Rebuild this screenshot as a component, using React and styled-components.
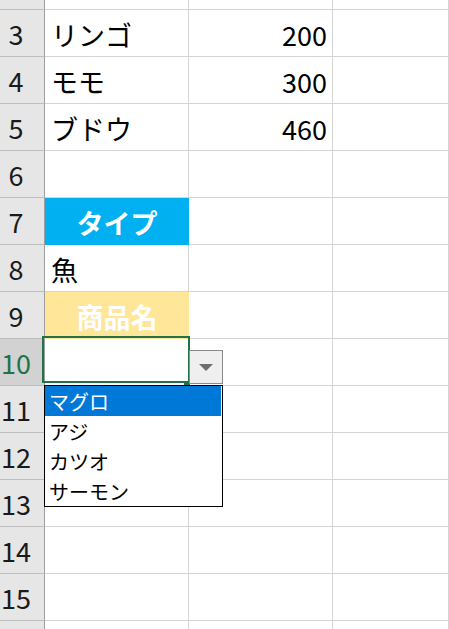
import React from 'react';
import styled, { createGlobalStyle } from 'styled-components';

const GlobalStyle = createGlobalStyle`
  html, body {
    margin: 0;
    padding: 0;
    background: #fff;
    overflow: hidden;
  }
  body {
    font-family: "Noto Sans CJK JP", "Noto Sans", sans-serif;
  }
`;

const Sheet = styled.div`
  display: grid;
  grid-template-columns: 45px 144px 144px 1fr;
  grid-template-rows: 10px repeat(13, 47px) 9px;
  width: 449px;
  height: 629px;
  overflow: hidden;
`;

const RowHead = styled.div`
  box-sizing: border-box;
  display: flex;
  align-items: center;
  justify-content: center;
  padding-right: 12px;
  background: ${(p) => (p.$active ? '#d2d2d2' : '#e6e6e6')};
  color: ${(p) => (p.$active ? '#217346' : '#1a1a1a')};
  border-right: 1px solid #9e9e9e;
  border-bottom: 1px solid #bdbdbd;
  font-size: 27px;
  line-height: 1;
  overflow: hidden;
`;

const Cell = styled.div`
  box-sizing: border-box;
  position: relative;
  display: flex;
  align-items: center;
  justify-content: ${(p) => p.$align || 'flex-start'};
  padding: 2px 5px 0 6px;
  background: ${(p) => p.$fill || '#fff'};
  border-right: 1px solid ${(p) => p.$fill || '#d4d4d4'};
  border-bottom: 1px solid ${(p) => p.$fill || '#d4d4d4'};
  color: ${(p) => (p.$fill ? '#fff' : '#000')};
  font-weight: ${(p) => (p.$bold ? 700 : 400)};
  font-size: 27px;
  line-height: 1;
  white-space: nowrap;
`;

const Selection = styled.div`
  position: absolute;
  left: -3px;
  top: -3px;
  width: 148px;
  height: 47px;
  box-sizing: border-box;
  border: 2px solid #217346;
  z-index: 2;
`;

const FillHandle = styled.div`
  position: absolute;
  left: 139px;
  top: 42px;
  width: 6px;
  height: 5px;
  background: #217346;
  z-index: 3;
`;

const DropButton = styled.div`
  position: absolute;
  left: 144px;
  top: 11px;
  width: 34px;
  height: 34px;
  box-sizing: border-box;
  background: #efefef;
  border: 1px solid #8a8a8a;
  display: flex;
  align-items: center;
  justify-content: center;
  z-index: 3;
`;

const Arrow = styled.span`
  width: 0;
  height: 0;
  border-left: 7px solid transparent;
  border-right: 7px solid transparent;
  border-top: 7px solid #6d6d6d;
`;

const List = styled.div`
  position: absolute;
  left: -1px;
  top: 46px;
  width: 179px;
  height: 122px;
  box-sizing: border-box;
  background: #fff;
  border: 1px solid #000;
  padding: 0 1px 0 0;
  display: flex;
  flex-direction: column;
  z-index: 4;
`;

const Item = styled.div`
  height: 30px;
  display: flex;
  align-items: center;
  padding: 2px 0 0 4px;
  box-sizing: border-box;
  font-size: 20px;
  line-height: 1;
  background: ${(p) => (p.$selected ? '#0078d7' : 'transparent')};
  color: ${(p) => (p.$selected ? '#fff' : '#000')};
`;

const rows = [
  { n: 2, b: '', c: '', partial: true },
  { n: 3, b: 'リンゴ', c: '200' },
  { n: 4, b: 'モモ', c: '300' },
  { n: 5, b: 'ブドウ', c: '460' },
  { n: 6, b: '', c: '' },
  { n: 7, b: 'タイプ', c: '', fill: '#00b0f0' },
  { n: 8, b: '魚', c: '' },
  { n: 9, b: '商品名', c: '', fill: '#ffe699' },
  { n: 10, b: '', c: '', active: true },
  { n: 11, b: '', c: '' },
  { n: 12, b: '', c: '' },
  { n: 13, b: '', c: '' },
  { n: 14, b: '', c: '' },
  { n: 15, b: '', c: '' },
  { n: 16, b: '', c: '', partial: true },
];

const options = ['マグロ', 'アジ', 'カツオ', 'サーモン'];

export default function App() {
  return (
    <>
      <GlobalStyle />
      <Sheet>
        {rows.map((r) => (
          <React.Fragment key={r.n}>
            <RowHead $active={r.active}>{r.partial ? '' : r.n}</RowHead>
            <Cell $fill={r.fill} $bold={!!r.fill} $align={r.fill ? 'center' : undefined}>
              {r.b}
              {r.active && (
                <>
                  <Selection />
                  <FillHandle />
                  <DropButton>
                    <Arrow />
                  </DropButton>
                  <List>
                    {options.map((o, i) => (
                      <Item key={o} $selected={i === 0}>
                        {o}
                      </Item>
                    ))}
                  </List>
                </>
              )}
            </Cell>
            <Cell $align="flex-end">{r.c}</Cell>
            <Cell />
          </React.Fragment>
        ))}
      </Sheet>
    </>
  );
}
